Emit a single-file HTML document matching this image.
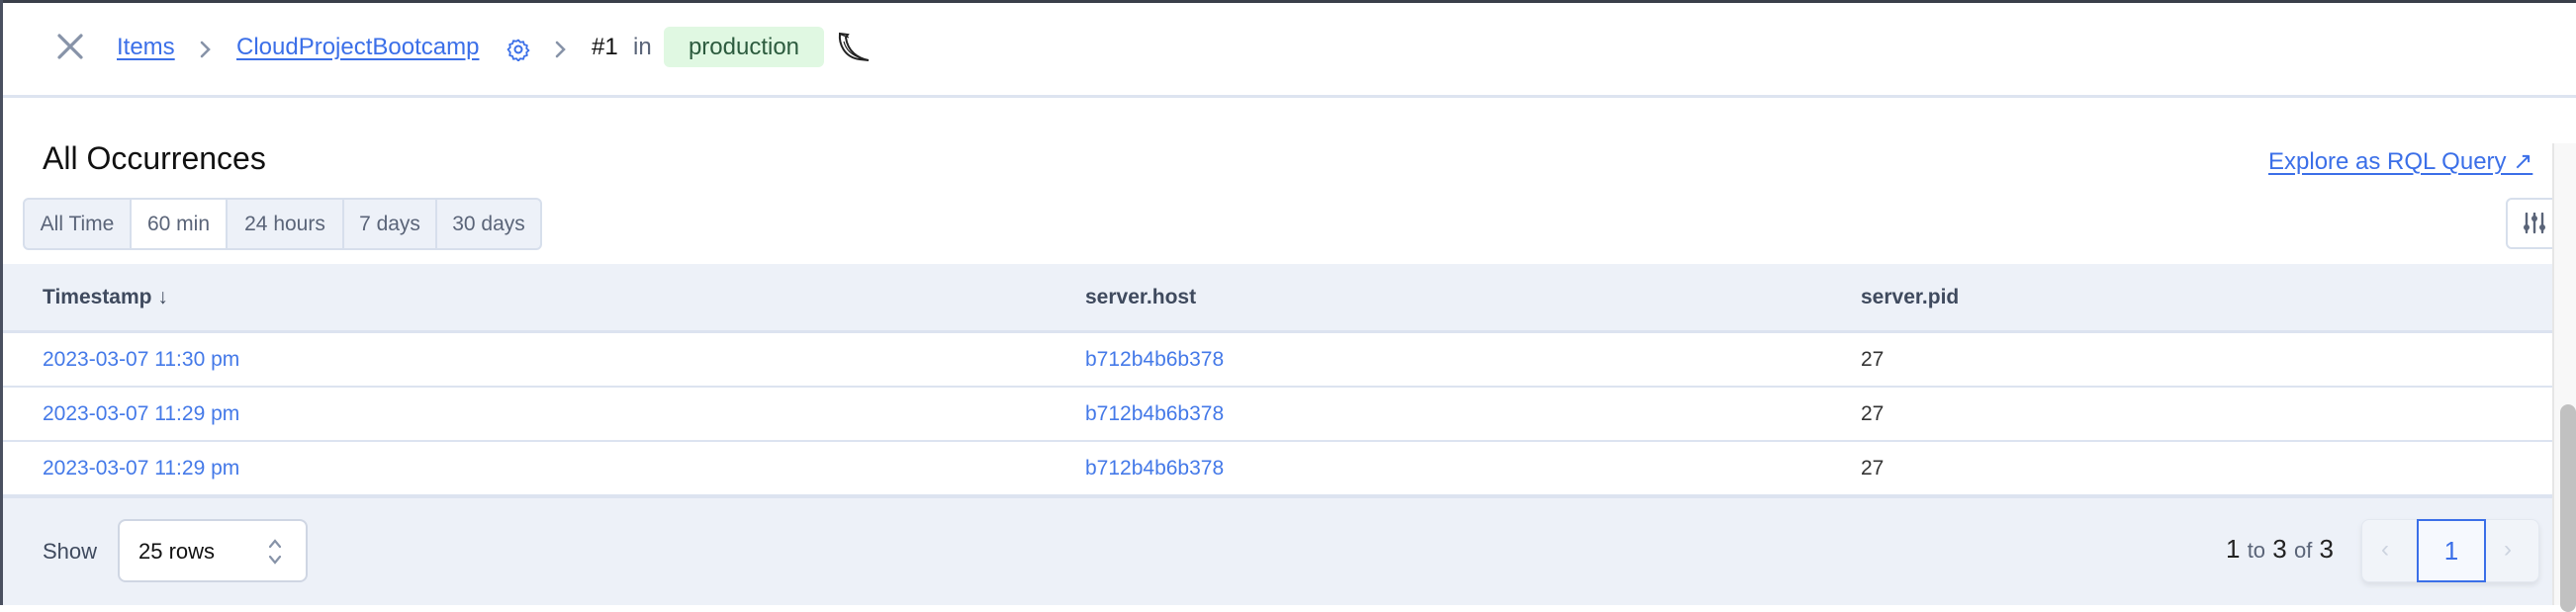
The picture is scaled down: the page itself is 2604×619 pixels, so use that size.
<!DOCTYPE html>
<html><head><meta charset="utf-8"><style>
*{box-sizing:border-box;margin:0;padding:0}
body{width:2604px;height:612px;overflow:hidden;background:#fff;font-family:"Liberation Sans",sans-serif;position:relative}
.a{position:absolute;white-space:nowrap}
.lnk{color:#3b6fe8;text-decoration:underline;text-underline-offset:4px}
.seg{position:absolute;top:200px;height:53px;border:2px solid #d7dfec;border-radius:6px;background:#edf1f8;display:flex;left:23px;width:525px;overflow:hidden}
.seg div{height:100%;display:flex;align-items:center;justify-content:center;font-size:21px;color:#5a6478;border-right:2px solid #d7dfec}
.seg div:last-child{border-right:none}
.row{position:absolute;left:0;width:2580px;height:53px;background:#fff}
.cell{position:absolute;font-size:21px;color:#4479e8;top:50%;transform:translateY(-50%)}
</style></head><body>
<div class="a" style="left:0;top:0;width:2604px;height:3px;background:#3a3f4a"></div>
<div class="a" style="left:0;top:0;width:3px;height:612px;background:#4a5060;z-index:5"></div>
<svg class="a" style="left:58px;top:34px" width="26" height="26" viewBox="0 0 26 26"><path d="M2 2L24 24M24 2L2 24" stroke="#8793a8" stroke-width="3.2" stroke-linecap="round"/></svg>
<div class="a lnk" style="left:118px;top:34px;font-size:24px">Items</div>
<svg class="a" style="left:201px;top:40px" width="14" height="20" viewBox="0 0 14 20"><path d="M3 3L10 10L3 17" stroke="#8793a8" stroke-width="2.6" fill="none" stroke-linecap="round"/></svg>
<div class="a lnk" style="left:239px;top:34px;font-size:24px">CloudProjectBootcamp</div>
<svg class="a" style="left:512px;top:38px" width="24" height="24" viewBox="0 0 24 24"><circle cx="12" cy="12" r="3.5" stroke="#3b6fe8" stroke-width="2" fill="none"/><path d="M12 2.5l2 2.3 3-.6.9 2.9 2.9.9-.6 3 2.3 2-2.3 2 .6 3-2.9.9-.9 2.9-3-.6-2 2.3-2-2.3-3 .6-.9-2.9-2.9-.9.6-3L1.5 12l2.3-2-.6-3 2.9-.9.9-2.9 3 .6z" stroke="#3b6fe8" stroke-width="1.8" fill="none" stroke-linejoin="round"/></svg>
<svg class="a" style="left:560px;top:40px" width="14" height="20" viewBox="0 0 14 20"><path d="M3 3L10 10L3 17" stroke="#8793a8" stroke-width="2.6" fill="none" stroke-linecap="round"/></svg>
<div class="a" style="left:598px;top:34px;font-size:24px;color:#111">#1</div>
<div class="a" style="left:640px;top:34px;font-size:24px;color:#5a6478">in</div>
<div class="a" style="left:671px;top:27px;width:162px;height:41px;background:#e0f8e2;border-radius:6px;font-size:24px;color:#2c5b3e;text-align:center;line-height:41px">production</div>
<svg class="a" style="left:845px;top:32px" width="36" height="32" viewBox="0 0 36 32"><path d="M4 2C3 12 8 26 24 28L33 29C22 27 12 20 10 6L12 3Z" fill="#fff" stroke="#222" stroke-width="2"/><path d="M5 3L13 6M8 10C10 18 16 24 26 27" stroke="#222" stroke-width="1.2" fill="none"/></svg>
<div class="a" style="left:0;top:96px;width:2604px;height:3px;background:#dde4f0"></div>
<div class="a" style="left:43px;top:142px;font-size:32px;color:#111">All Occurrences</div>
<div class="a lnk" style="left:2293px;top:149px;font-size:24px">Explore as RQL Query ↗</div>
<div class="seg">
<div style="width:108px">All Time</div>
<div style="width:97px;background:#fff">60 min</div>
<div style="width:118px">24 hours</div>
<div style="width:94px">7 days</div>
<div style="flex:1">30 days</div>
</div>
<div class="a" style="left:2533px;top:200px;width:60px;height:52px;border:2px solid #d7dfec;border-radius:6px;background:#fff"></div>
<svg class="a" style="left:2550px;top:215px" width="24" height="22" viewBox="0 0 24 22"><g stroke="#5a6478" stroke-width="2.4" stroke-linecap="round"><path d="M4 1V20M12 1V20M20 1V20"/></g><g fill="#5a6478"><circle cx="4" cy="15" r="3"/><circle cx="12" cy="6" r="3"/><circle cx="20" cy="15" r="3"/></g></svg>
<div class="a" style="left:0;top:267px;width:2580px;height:245px;background:#dce3f0"></div>
<div class="a" style="left:0;top:267px;width:2580px;height:67px;background:#edf1f8"></div>
<div class="a" style="left:43px;top:289px;font-size:21px;color:#3f4a5e;font-weight:bold">Timestamp <span style="font-weight:normal">↓</span></div>
<div class="a" style="left:1097px;top:289px;font-size:21px;color:#3f4a5e;font-weight:bold">server.host</div>
<div class="a" style="left:1881px;top:289px;font-size:21px;color:#3f4a5e;font-weight:bold">server.pid</div>
<div class="row" style="top:337px"><span class="cell" style="left:43px">2023-03-07 11:30 pm</span><span class="cell" style="left:1097px">b712b4b6b378</span><span class="cell" style="left:1881px;color:#333">27</span></div>
<div class="row" style="top:392px"><span class="cell" style="left:43px">2023-03-07 11:29 pm</span><span class="cell" style="left:1097px">b712b4b6b378</span><span class="cell" style="left:1881px;color:#333">27</span></div>
<div class="row" style="top:447px"><span class="cell" style="left:43px">2023-03-07 11:29 pm</span><span class="cell" style="left:1097px">b712b4b6b378</span><span class="cell" style="left:1881px;color:#333">27</span></div>
<div class="a" style="left:0;top:504px;width:2580px;height:108px;background:#edf1f8"></div>
<div class="a" style="left:43px;top:545px;font-size:22px;color:#3f4a5e">Show</div>
<div class="a" style="left:119px;top:525px;width:192px;height:64px;background:#fff;border:2px solid #cfd6e3;border-radius:8px"></div>
<div class="a" style="left:140px;top:545px;font-size:22px;color:#111">25 rows</div>
<svg class="a" style="left:270px;top:543px" width="16" height="30" viewBox="0 0 16 30"><path d="M3 10L8 4L13 10M3 20L8 26L13 20" stroke="#8793a8" stroke-width="2.2" fill="none" stroke-linecap="round"/></svg>
<div class="a" style="left:2250px;top:540px;font-size:26px;color:#222">1 <span style="font-size:22px;color:#5a6478">to</span> 3 <span style="font-size:22px;color:#5a6478">of</span> 3</div>
<div class="a" style="left:2387px;top:525px;width:180px;height:64px;background:#f1f4f9;border:1px solid #e3e8f0;border-radius:8px;box-shadow:0 3px 6px rgba(0,0,0,.08)"></div>
<div class="a" style="left:2443px;top:525px;width:70px;height:64px;background:#f6f9fe;border:2px solid #3b6fe8;color:#3b6fe8;font-size:26px;text-align:center;line-height:60px">1</div>
<div class="a" style="left:2407px;top:542px;font-size:24px;color:#ccd3df">‹</div>
<div class="a" style="left:2531px;top:542px;font-size:24px;color:#ccd3df">›</div>
<div class="a" style="left:2580px;top:145px;width:24px;height:467px;background:#f8f8f8;border-left:2px solid #e6e6e6"></div>
<div class="a" style="left:2588px;top:409px;width:16px;height:210px;background:#c1c1c1;border-radius:8px"></div>
</body></html>
